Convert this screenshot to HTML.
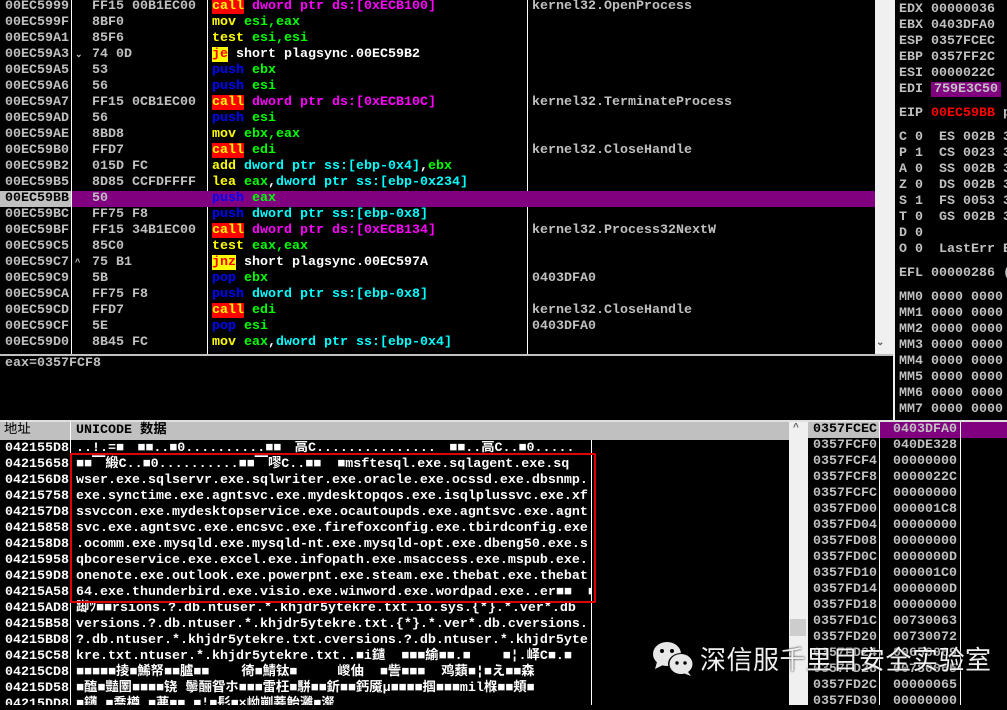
<!DOCTYPE html>
<html><head><meta charset="utf-8"><style>
*{margin:0;padding:0;box-sizing:border-box}
body{width:1007px;height:705px;background:#000;overflow:hidden;position:relative;font-family:"Liberation Mono","Noto Sans CJK SC",monospace;font-size:13.33px;font-weight:bold;color:#c0c0c0}
.r{position:absolute;height:16px;line-height:16px;white-space:pre}
.a{position:absolute;left:5px}
.b{position:absolute;left:92px}
.d{position:absolute;left:212px;color:#fff}
.c{position:absolute;left:532px}
.call{background:#f00;color:#ff0}
.j{background:#ff0;color:#f00}
.p{color:#0000ff}
.y{color:#ff0}
.g{color:#0f0}
.cy{color:#0ff}
.m{color:#f0f}
.w{color:#fff}
.v{position:absolute;background:#fff;width:1px}
.h{position:absolute;background:#c0c0c0}
</style></head><body>
<!-- disasm pane -->
<div class="v" style="left:71px;top:0;height:354px"></div>
<div class="v" style="left:207px;top:0;height:354px"></div>
<div class="v" style="left:527px;top:0;height:354px"></div>
<div style="position:absolute;left:72px;top:191px;width:803px;height:16px;background:#800080"></div>
<div style="position:absolute;left:0;top:191px;width:71px;height:16px;background:#c0c0c0"></div>
<div class="r" style="top:-1px;width:875px"><span class="a">00EC5999</span><span class="b">FF15 00B1EC00</span><span class="d"><span class="call">call</span> <span class="m">dword ptr ds:[0xECB100]</span></span><span class="c">kernel32.OpenProcess</span></div>
<div class="r" style="top:15px"><span class="a">00EC599F</span><span class="b">8BF0</span><span class="d"><span class="y">mov</span> <span class="g">esi,eax</span></span></div>
<div class="r" style="top:31px"><span class="a">00EC59A1</span><span class="b">85F6</span><span class="d"><span class="y">test</span> <span class="g">esi,esi</span></span></div>
<div class="r" style="top:47px"><span class="a">00EC59A3</span><span style="position:absolute;left:75px;font-size:9px">⌄</span><span class="b">74 0D</span><span class="d"><span class="j">je</span> short plagsync.00EC59B2</span></div>
<div class="r" style="top:63px"><span class="a">00EC59A5</span><span class="b">53</span><span class="d"><span class="p">push</span> <span class="g">ebx</span></span></div>
<div class="r" style="top:79px"><span class="a">00EC59A6</span><span class="b">56</span><span class="d"><span class="p">push</span> <span class="g">esi</span></span></div>
<div class="r" style="top:95px"><span class="a">00EC59A7</span><span class="b">FF15 0CB1EC00</span><span class="d"><span class="call">call</span> <span class="m">dword ptr ds:[0xECB10C]</span></span><span class="c">kernel32.TerminateProcess</span></div>
<div class="r" style="top:111px"><span class="a">00EC59AD</span><span class="b">56</span><span class="d"><span class="p">push</span> <span class="g">esi</span></span></div>
<div class="r" style="top:127px"><span class="a">00EC59AE</span><span class="b">8BD8</span><span class="d"><span class="y">mov</span> <span class="g">ebx,eax</span></span></div>
<div class="r" style="top:143px"><span class="a">00EC59B0</span><span class="b">FFD7</span><span class="d"><span class="call">call</span> <span class="g">edi</span></span><span class="c">kernel32.CloseHandle</span></div>
<div class="r" style="top:159px"><span class="a">00EC59B2</span><span class="b">015D FC</span><span class="d"><span class="y">add</span> <span class="cy">dword ptr ss:[ebp-0x4]</span><span class="w">,</span><span class="g">ebx</span></span></div>
<div class="r" style="top:175px"><span class="a">00EC59B5</span><span class="b">8D85 CCFDFFFF</span><span class="d"><span class="y">lea</span> <span class="g">eax</span><span class="w">,</span><span class="cy">dword ptr ss:[ebp-0x234]</span></span></div>
<div class="r" style="top:191px"><span class="a" style="color:#000">00EC59BB</span><span class="b">50</span><span class="d"><span class="p">push</span> <span class="g">eax</span></span></div>
<div class="r" style="top:207px"><span class="a">00EC59BC</span><span class="b">FF75 F8</span><span class="d"><span class="p">push</span> <span class="cy">dword ptr ss:[ebp-0x8]</span></span></div>
<div class="r" style="top:223px"><span class="a">00EC59BF</span><span class="b">FF15 34B1EC00</span><span class="d"><span class="call">call</span> <span class="m">dword ptr ds:[0xECB134]</span></span><span class="c">kernel32.Process32NextW</span></div>
<div class="r" style="top:239px"><span class="a">00EC59C5</span><span class="b">85C0</span><span class="d"><span class="y">test</span> <span class="g">eax,eax</span></span></div>
<div class="r" style="top:255px"><span class="a">00EC59C7</span><span style="position:absolute;left:75px;font-size:9px">^</span><span class="b">75 B1</span><span class="d"><span class="j">jnz</span> short plagsync.00EC597A</span></div>
<div class="r" style="top:271px"><span class="a">00EC59C9</span><span class="b">5B</span><span class="d"><span class="p">pop</span> <span class="g">ebx</span></span><span class="c">0403DFA0</span></div>
<div class="r" style="top:287px"><span class="a">00EC59CA</span><span class="b">FF75 F8</span><span class="d"><span class="p">push</span> <span class="cy">dword ptr ss:[ebp-0x8]</span></span></div>
<div class="r" style="top:303px"><span class="a">00EC59CD</span><span class="b">FFD7</span><span class="d"><span class="call">call</span> <span class="g">edi</span></span><span class="c">kernel32.CloseHandle</span></div>
<div class="r" style="top:319px"><span class="a">00EC59CF</span><span class="b">5E</span><span class="d"><span class="p">pop</span> <span class="g">esi</span></span><span class="c">0403DFA0</span></div>
<div class="r" style="top:335px"><span class="a">00EC59D0</span><span class="b">8B45 FC</span><span class="d"><span class="y">mov</span> <span class="g">eax</span><span class="w">,</span><span class="cy">dword ptr ss:[ebp-0x4]</span></span></div>
<!-- scrollbar -->
<div style="position:absolute;left:875px;top:0;width:18px;height:354px;background:#f0f0f0"></div>
<div style="position:absolute;left:876px;top:337px;font-size:10px;color:#606060">⌄</div>
<div class="h" style="left:0;top:354px;width:893px;height:2px"></div>
<div style="position:absolute;left:893px;top:0;width:114px;height:420px;background:#f0f0f0;"></div>
<div style="position:absolute;left:895px;top:0;width:112px;height:420px;background:#000"></div>
<div class="r" style="top:356px;left:5px">eax=0357FCF8</div>
<!-- registers -->
<div class="r" style="left:899px;top:2px">EDX 00000036</div>
<div class="r" style="left:899px;top:18px">EBX 0403DFA0</div>
<div class="r" style="left:899px;top:34px">ESP 0357FCEC</div>
<div class="r" style="left:899px;top:50px">EBP 0357FF2C</div>
<div class="r" style="left:899px;top:66px">ESI 0000022C</div>
<div class="r" style="left:899px;top:82px">EDI <span style="background:#800080;padding:0 3px">759E3C50</span> j</div>
<div class="r" style="left:899px;top:106px">EIP <span style="color:#f00">00EC59BB</span> p</div>
<div class="r" style="left:899px;top:130px">C 0  ES 002B 3</div>
<div class="r" style="left:899px;top:146px">P 1  CS 0023 3</div>
<div class="r" style="left:899px;top:162px">A 0  SS 002B 3</div>
<div class="r" style="left:899px;top:178px">Z 0  DS 002B 3</div>
<div class="r" style="left:899px;top:194px">S 1  FS 0053 3</div>
<div class="r" style="left:899px;top:210px">T 0  GS 002B 3</div>
<div class="r" style="left:899px;top:226px">D 0</div>
<div class="r" style="left:899px;top:242px">O 0  LastErr E</div>
<div class="r" style="left:899px;top:266px">EFL 00000286 (</div>
<div class="r" style="left:899px;top:290px">MM0 0000 0000</div>
<div class="r" style="left:899px;top:306px">MM1 0000 0000</div>
<div class="r" style="left:899px;top:322px">MM2 0000 0000</div>
<div class="r" style="left:899px;top:338px">MM3 0000 0000</div>
<div class="r" style="left:899px;top:354px">MM4 0000 0000</div>
<div class="r" style="left:899px;top:370px">MM5 0000 0000</div>
<div class="r" style="left:899px;top:386px">MM6 0000 0000</div>
<div class="r" style="left:899px;top:402px">MM7 0000 0000</div>
<div class="h" style="left:0;top:420px;width:1007px;height:2px;background:#e0e0e0"></div>
<!-- dump -->
<div style="position:absolute;left:0;top:422px;width:789px;height:18px;background:#c0c0c0;color:#000;font-weight:normal;line-height:18px;white-space:pre"><span style="position:absolute;left:4px">地址</span><span style="position:absolute;left:76px;font-weight:bold">UNICODE 数据</span></div>
<div class="v" style="left:70px;top:422px;height:283px"></div>
<div class="v" style="left:591px;top:440px;height:265px"></div>
<div style="position:absolute;left:70px;top:422px;width:1px;height:18px;background:#fff"></div>
<div id="dump" style="position:absolute;left:0;top:441px;width:591px;height:264px;overflow:hidden;color:#fff">
<div class="r" style="top:0"><span class="a">042155D8</span><span style="position:absolute;left:76px">..!.=■▔■■..■0..........■■▔高C...............▔■■..高C..■0.....</span></div>
<div class="r" style="top:16px"><span class="a">04215658</span><span style="position:absolute;left:76px">■■▔緞C..■0..........■■▔嘐C..■■  ■msftesql.exe.sqlagent.exe.sq</span></div>
<div class="r" style="top:32px"><span class="a">042156D8</span><span style="position:absolute;left:76px">wser.exe.sqlservr.exe.sqlwriter.exe.oracle.exe.ocssd.exe.dbsnmp.</span></div>
<div class="r" style="top:48px"><span class="a">04215758</span><span style="position:absolute;left:76px">exe.synctime.exe.agntsvc.exe.mydesktopqos.exe.isqlplussvc.exe.xf</span></div>
<div class="r" style="top:64px"><span class="a">042157D8</span><span style="position:absolute;left:76px">ssvccon.exe.mydesktopservice.exe.ocautoupds.exe.agntsvc.exe.agnt</span></div>
<div class="r" style="top:80px"><span class="a">04215858</span><span style="position:absolute;left:76px">svc.exe.agntsvc.exe.encsvc.exe.firefoxconfig.exe.tbirdconfig.exe</span></div>
<div class="r" style="top:96px"><span class="a">042158D8</span><span style="position:absolute;left:76px">.ocomm.exe.mysqld.exe.mysqld-nt.exe.mysqld-opt.exe.dbeng50.exe.s</span></div>
<div class="r" style="top:112px"><span class="a">04215958</span><span style="position:absolute;left:76px">qbcoreservice.exe.excel.exe.infopath.exe.msaccess.exe.mspub.exe.</span></div>
<div class="r" style="top:128px"><span class="a">042159D8</span><span style="position:absolute;left:76px">onenote.exe.outlook.exe.powerpnt.exe.steam.exe.thebat.exe.thebat</span></div>
<div class="r" style="top:144px"><span class="a">04215A58</span><span style="position:absolute;left:76px">64.exe.thunderbird.exe.visio.exe.winword.exe.wordpad.exe..er■■  ■</span></div>
<div class="r" style="top:160px"><span class="a">04215AD8</span><span style="position:absolute;left:76px">踋ﾂ■■rsions.?.db.ntuser.*.khjdr5ytekre.txt.io.sys.{*}.*.ver*.db</span></div>
<div class="r" style="top:176px"><span class="a">04215B58</span><span style="position:absolute;left:76px">versions.?.db.ntuser.*.khjdr5ytekre.txt.{*}.*.ver*.db.cversions.</span></div>
<div class="r" style="top:192px"><span class="a">04215BD8</span><span style="position:absolute;left:76px">?.db.ntuser.*.khjdr5ytekre.txt.cversions.?.db.ntuser.*.khjdr5yte</span></div>
<div class="r" style="top:208px"><span class="a">04215C58</span><span style="position:absolute;left:76px">kre.txt.ntuser.*.khjdr5ytekre.txt..■i鑓  ■■■緰■■.■    ■¦.峄C■.■</span></div>
<div class="r" style="top:224px"><span class="a">04215CD8</span><span style="position:absolute;left:76px">■■■■■掕■鯑帑■■臚■■    徛■鯖钛■     嵕伷  ■訾■■■  鸡蘱■¦■え■■森 </span></div>
<div class="r" style="top:240px"><span class="a">04215D58</span><span style="position:absolute;left:76px">■醢■豔圛■■■■铙 鬡酾眢ホ■■■雷枉■駢■■釿■■鈣魇μ■■■■掴■■■mil椺■■頬■</span></div>
<div class="r" style="top:256px"><span class="a">04215DD8</span><span style="position:absolute;left:76px">■鑮 ■喬樽 ■茀■■ ■¦■髟■×岰剻菨鲐灉■瀣 </span></div>
</div>
<div style="position:absolute;left:70px;top:453px;width:526px;height:150px;border:2px solid #e00000"></div>
<!-- dump scrollbar -->
<div style="position:absolute;left:789px;top:422px;width:19px;height:283px;background:#f0f0f0"></div>
<div style="position:absolute;left:793px;top:423px;font-size:10px;color:#606060">^</div>
<div style="position:absolute;left:790px;top:619px;width:16px;height:17px;background:#cdcdcd"></div>
<!-- stack -->
<div style="position:absolute;left:808px;top:422px;width:71px;height:16px;background:#c0c0c0"></div>
<div style="position:absolute;left:880px;top:422px;width:127px;height:16px;background:#800080"></div>
<div class="v" style="left:879px;top:422px;height:283px"></div>
<div class="v" style="left:960px;top:422px;height:283px"></div>
<div id="st"></div>
<div class="r" style="top:422px;left:813px;color:#000">0357FCEC</div><div class="r" style="top:422px;left:893px">0403DFA0</div>
<div class="r" style="top:438px;left:813px">0357FCF0</div><div class="r" style="top:438px;left:893px">040DE328</div>
<div class="r" style="top:454px;left:813px">0357FCF4</div><div class="r" style="top:454px;left:893px">00000000</div>
<div class="r" style="top:470px;left:813px">0357FCF8</div><div class="r" style="top:470px;left:893px">0000022C</div>
<div class="r" style="top:486px;left:813px">0357FCFC</div><div class="r" style="top:486px;left:893px">00000000</div>
<div class="r" style="top:502px;left:813px">0357FD00</div><div class="r" style="top:502px;left:893px">000001C8</div>
<div class="r" style="top:518px;left:813px">0357FD04</div><div class="r" style="top:518px;left:893px">00000000</div>
<div class="r" style="top:534px;left:813px">0357FD08</div><div class="r" style="top:534px;left:893px">00000000</div>
<div class="r" style="top:550px;left:813px">0357FD0C</div><div class="r" style="top:550px;left:893px">0000000D</div>
<div class="r" style="top:566px;left:813px">0357FD10</div><div class="r" style="top:566px;left:893px">000001C0</div>
<div class="r" style="top:582px;left:813px">0357FD14</div><div class="r" style="top:582px;left:893px">0000000D</div>
<div class="r" style="top:598px;left:813px">0357FD18</div><div class="r" style="top:598px;left:893px">00000000</div>
<div class="r" style="top:614px;left:813px">0357FD1C</div><div class="r" style="top:614px;left:893px">00730063</div>
<div class="r" style="top:630px;left:813px">0357FD20</div><div class="r" style="top:630px;left:893px">00730072</div>
<div class="r" style="top:646px;left:813px">0357FD24</div><div class="r" style="top:646px;left:893px">00650069</div>
<div class="r" style="top:662px;left:813px">0357FD28</div><div class="r" style="top:662px;left:893px">00780065</div>
<div class="r" style="top:678px;left:813px">0357FD2C</div><div class="r" style="top:678px;left:893px">00000065</div>
<div class="r" style="top:694px;left:813px">0357FD30</div><div class="r" style="top:694px;left:893px">00000000</div>
<!-- watermark -->
<svg style="position:absolute;left:652px;top:641px" width="44" height="36" viewBox="0 0 44 36">
<ellipse cx="15" cy="13" rx="14" ry="12" fill="#e8e8e8"/>
<path d="M5 21 L3 28 L11 24Z" fill="#e8e8e8"/>
<ellipse cx="29" cy="23" rx="13" ry="11" fill="#000"/>
<ellipse cx="29" cy="23" rx="11.5" ry="10" fill="#e8e8e8"/>
<path d="M36 31 L39 35 L31 32Z" fill="#e8e8e8"/>
<circle cx="10" cy="10" r="2" fill="#000"/><circle cx="20" cy="10" r="2" fill="#000"/>
<circle cx="25" cy="22" r="1.7" fill="#000"/><circle cx="33" cy="22" r="1.7" fill="#000"/>
</svg>
<div style="position:absolute;left:700px;top:642px;font-family:'Noto Sans CJK SC',sans-serif;font-weight:normal;font-size:26px;line-height:34px;color:#f0f0f0;letter-spacing:0.5px;text-shadow:0 0 2px #000">深信服千里目安全实验室</div>
</body></html>
